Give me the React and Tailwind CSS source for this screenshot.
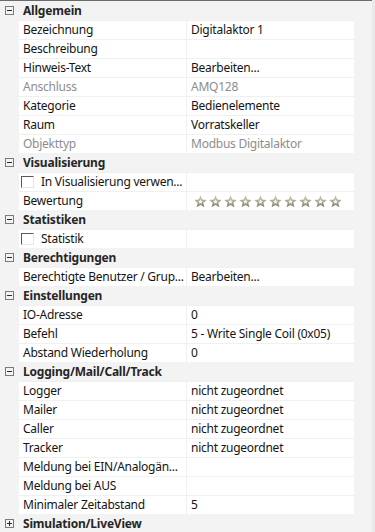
import React from "react";

const F = { fontFamily: '"Noto Sans", "Open Sans", sans-serif' };

function Expander({ open = true }) {
  return (
    <div className="w-[19px] h-full flex items-center justify-center shrink-0">
      <svg width="9" height="9" viewBox="0 0 9 9" className="ml-[-1px]">
        <rect x="0.5" y="0.5" width="8" height="8" fill="none" stroke="#7a7a7a" />
        <line x1="2" y1="4.5" x2="7" y2="4.5" stroke="#2a2a2a" />
        {!open && <line x1="4.5" y1="2" x2="4.5" y2="7" stroke="#2a2a2a" />}
      </svg>
    </div>
  );
}

function Header({ title, open = true }) {
  return (
    <div className="flex h-[19px] items-center shrink-0">
      <Expander open={open} />
      <div className="pl-[4px] font-bold text-[12px] tracking-[-0.2px] text-[#262626] leading-none">{title}</div>
    </div>
  );
}

function Star() {
  return (
    <svg width="13" height="13" viewBox="0 0 24 24" className="shrink-0">
      <defs>
        <linearGradient id="sg" x1="0" y1="0" x2="0" y2="1">
          <stop offset="0" stopColor="#d2cdbd" />
          <stop offset="1" stopColor="#857d6a" />
        </linearGradient>
      </defs>
      <path
        d="M12 0.5 L15.2 8.3 L23.5 9 L17.2 14.4 L19.2 22.8 L12 18.3 L4.8 22.8 L6.8 14.4 L0.5 9 L8.8 8.3 Z"
        fill="url(#sg)"
      />
      <path
        d="M12 7.5 L13.3 10.8 L16.6 11.1 L14.1 13.2 L14.9 16.6 L12 14.8 L9.1 16.6 L9.9 13.2 L7.4 11.1 L10.7 10.8 Z"
        fill="#f4f2ec"
      />
    </svg>
  );
}

function Checkbox() {
  return (
    <div className="w-[13px] h-[12px] shrink-0 border-t border-l border-[#5a5a5a] border-r border-b border-r-[#e6e6e6] border-b-[#e6e6e6] bg-white ml-[-2px] mr-[7px]" />
  );
}

function Row({ label, value, disabled, checkbox, stars }) {
  const tc = disabled ? "text-[#8d8d8d]" : "text-[#141414]";
  return (
    <div className="flex h-[19px] shrink-0">
      <div className="w-[19px] shrink-0" />
      <div className="flex flex-col w-[335px]">
        <div className="h-[1px] bg-[#f0f0f0]" />
        <div className="flex h-[18px]">
          <div className={`w-[167px] shrink-0 bg-white flex items-center pl-[4px] overflow-hidden whitespace-nowrap text-[12px] tracking-[-0.25px] ${tc}`}>
            {checkbox && <Checkbox />}
            <span className="leading-none">{label}</span>
          </div>
          <div className="w-[1px] bg-[#f0f0f0] shrink-0" />
          <div className={`w-[167px] shrink-0 bg-white flex items-center pl-[4px] overflow-hidden whitespace-nowrap text-[12px] tracking-[-0.25px] ${tc}`}>
            {stars ? (
              <div className="flex gap-[2px] pl-[3px] pt-[1px]">
                {Array.from({ length: 10 }).map((_, i) => (
                  <Star key={i} />
                ))}
              </div>
            ) : (
              <span className="leading-none">{value}</span>
            )}
          </div>
        </div>
      </div>
    </div>
  );
}

export default function App() {
  return (
    <div className="w-[375px] h-[532px] bg-[#f3f3f3] overflow-hidden flex" style={F}>
      <div className="w-[372px] flex flex-col">
        <div className="h-[1px] bg-[#6b6b6b] shrink-0" />
        <Header title="Allgemein" />
        <Row label="Bezeichnung" value="Digitalaktor 1" />
        <Row label="Beschreibung" value="" />
        <Row label="Hinweis-Text" value="Bearbeiten..." />
        <Row label="Anschluss" value="AMQ128" disabled />
        <Row label="Kategorie" value="Bedienelemente" />
        <Row label="Raum" value="Vorratskeller" />
        <Row label="Objekttyp" value="Modbus Digitalaktor" disabled />
        <Header title="Visualisierung" />
        <Row label="In Visualisierung verwen..." value="" checkbox />
        <Row label="Bewertung" stars />
        <Header title="Statistiken" />
        <Row label="Statistik" value="" checkbox />
        <Header title="Berechtigungen" />
        <Row label="Berechtigte Benutzer / Grup..." value="Bearbeiten..." />
        <Header title="Einstellungen" />
        <Row label="IO-Adresse" value="0" />
        <Row label="Befehl" value="5 - Write Single Coil (0x05)" />
        <Row label="Abstand Wiederholung" value="0" />
        <Header title="Logging/Mail/Call/Track" />
        <Row label="Logger" value="nicht zugeordnet" />
        <Row label="Mailer" value="nicht zugeordnet" />
        <Row label="Caller" value="nicht zugeordnet" />
        <Row label="Tracker" value="nicht zugeordnet" />
        <Row label="Meldung bei EIN/Analogän..." value="" />
        <Row label="Meldung bei AUS" value="" />
        <Row label="Minimaler Zeitabstand" value="5" />
        <Header title="Simulation/LiveView" open={false} />
      </div>
      <div className="w-[3px] bg-[#eaeaea]" />
    </div>
  );
}
